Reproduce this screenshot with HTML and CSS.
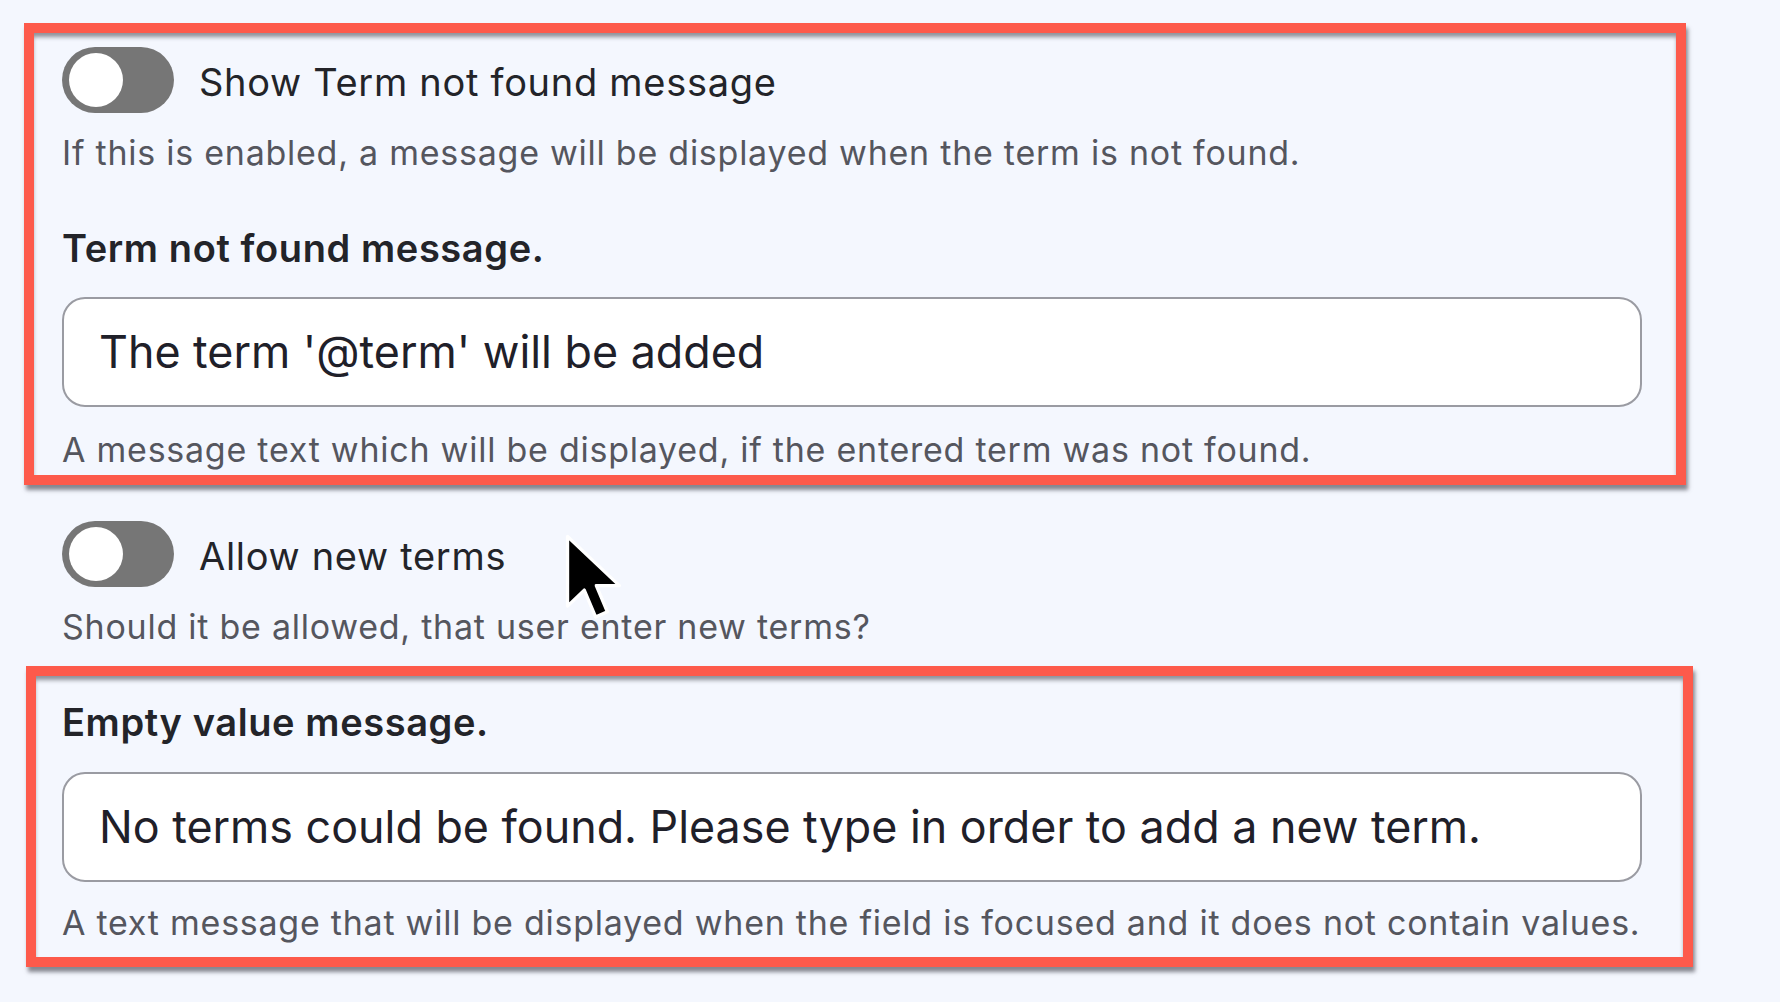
FILE: index.html
```html
<!DOCTYPE html>
<html lang="en">
<head>
<meta charset="utf-8">
<title>Autocomplete settings</title>
<link rel="stylesheet" href="styles.css">
</head>
<body>
<div class="page">
  <section class="annot annot-first">
    <div class="toggle-row">
      <span class="toggle"><span class="knob"></span></span>
      <span class="toggle-label">Show Term not found message</span>
    </div>
    <p class="desc desc-after-toggle">If this is enabled, a message will be displayed when the term is not found.</p>
    <label class="field-label field-label-first">Term not found message.</label>
    <div class="input">The term '@term' will be added</div>
    <p class="desc desc-help">A message text which will be displayed, if the entered term was not found.</p>
  </section>

  <section class="plain">
    <div class="toggle-row">
      <span class="toggle"><span class="knob"></span></span>
      <span class="toggle-label">Allow new terms</span>
    </div>
    <p class="desc desc-after-toggle">Should it be allowed, that user enter new terms?</p>
  </section>

  <section class="annot annot-second">
    <label class="field-label">Empty value message.</label>
    <div class="input">No terms could be found. Please type in order to add a new term.</div>
    <p class="desc desc-help desc-help-second">A text message that will be displayed when the field is focused and it does not contain values.</p>
  </section>

  <svg class="cursor" width="66" height="92" viewBox="0 0 28 39" aria-hidden="true">
    <path d="M1.5 1.5 L1.5 31 L8.6 24.2 L13.4 35.6 L18.4 33.4 L13.7 22.3 L23.5 22.3 Z" fill="#000" stroke="#fff" stroke-width="1.4" stroke-linejoin="round"/>
  </svg>
</div>
</body>
</html>
```

FILE: styles.css
```css
* { box-sizing: border-box; }
html, body {
  margin: 0;
  padding: 0;
  background: #f4f7fe;
}
body {
  font-family: Inter, "Noto Sans", "Liberation Sans", sans-serif;
  color: #232429;
  width: 1780px;
  height: 1002px;
  overflow: hidden;
}
.page {
  position: relative;
  padding-top: 23px;
}
.annot {
  border: 10px solid #fd5a4b;
  box-shadow: inset 0 5px 4px -1px rgba(60, 60, 70, 0.55), 2px 5px 4px rgba(60, 60, 70, 0.6);
}
.annot-first {
  margin-left: 24px;
  width: 1662px;
  padding: 14px 0 5px 28px;
}
.annot-second {
  margin-left: 26px;
  width: 1667px;
  padding: 24px 0 14px 26px;
  margin-top: 19px;
}
.plain {
  margin-left: 62px;
  padding-top: 36px;
}
.toggle-row {
  display: flex;
  align-items: center;
  gap: 25px;
  height: 66px;
}
.toggle {
  display: block;
  width: 112px;
  height: 66px;
  border-radius: 33px;
  background: #767676;
  padding: 6px 0 0 7px;
}
.knob {
  display: block;
  width: 54px;
  height: 54px;
  border-radius: 50%;
  background: #fff;
}
.toggle-label {
  font-size: 38px;
  letter-spacing: 0.7px;
  line-height: 44px;
  padding-top: 3px;
}
.desc {
  margin: 0;
  font-size: 34px;
  letter-spacing: 0.75px;
  line-height: 40px;
  color: #55565e;
}
.desc-after-toggle { margin-top: 20px; }
.desc-help { margin-top: 23px; }
.desc-help-second { margin-top: 21px; }
.field-label {
  display: block;
  font-size: 38px;
  letter-spacing: 0.6px;
  line-height: 44px;
  font-weight: 600;
}
.field-label-first { margin-top: 53px; }
.input {
  width: 1580px;
  height: 110px;
  margin-top: 27px;
  border: 2px solid #9a9ba2;
  border-radius: 23px;
  background: #fff;
  padding-left: 35px;
  display: flex;
  align-items: center;
  font-size: 44.8px;
  color: #1f2029;
}
.annot-second .input { margin-top: 28px; }
.cursor {
  position: absolute;
  left: 564px;
  top: 533px;
}
```
